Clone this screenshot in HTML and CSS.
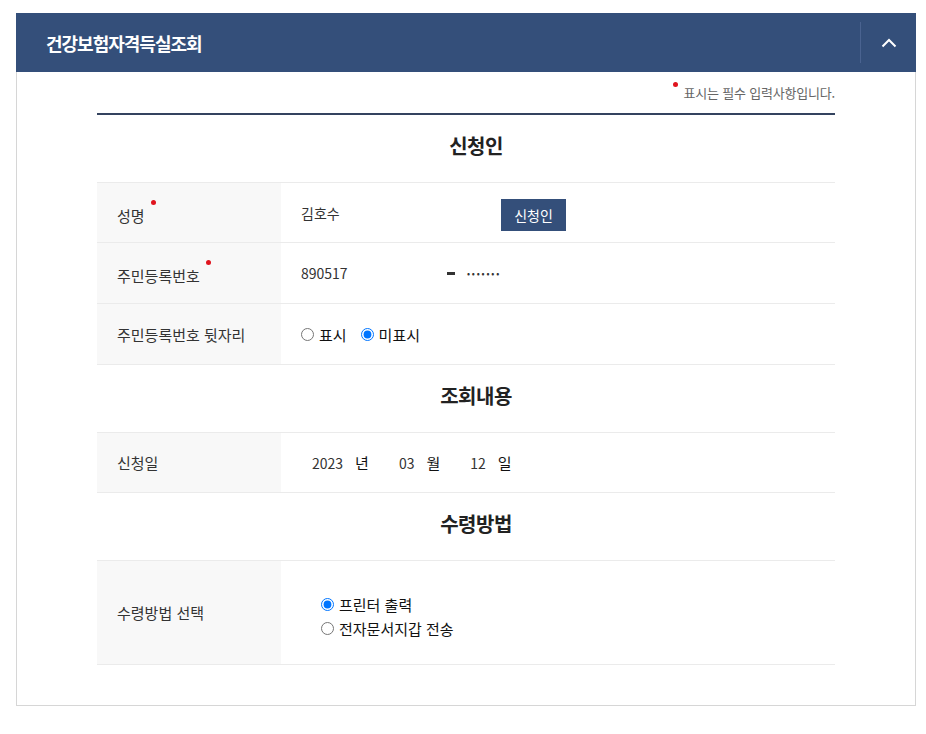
FILE: index.html
```html
<!DOCTYPE html>
<html lang="ko">
<head>
    <meta charset="UTF-8">
    <meta name="viewport" content="width=device-width, initial-scale=1.0">
    <title>건강보험자격득실조회</title>
    <link rel="stylesheet" href="styles.css">
</head>
<body>
    <div class="panel">
        <div class="panel_head">
            <h2 class="panel_title">건강보험자격득실조회</h2>
            <a class="toggle">
                <svg width="16" height="10" viewBox="0 0 16 10"><path d="M1.5 8.5 L8 2 L14.5 8.5" fill="none" stroke="#fff" stroke-width="2"/></svg>
            </a>
        </div>
        <div class="panel_body">
            <p class="note"><span class="req"></span>표시는 필수 입력사항입니다.</p>
            <div class="form">
                <h3 class="sec_title">신청인</h3>
                <div class="row">
                    <div class="th"><span>성명<span class="req"></span></span></div>
                    <div class="td">
                        <span class="name">김호수</span>
                        <a class="btn">신청인</a>
                    </div>
                </div>
                <div class="row">
                    <div class="th"><span>주민등록번호<span class="req"></span></span></div>
                    <div class="td">
                        <span class="jumin">890517</span>
                        <span class="dash"></span>
                        <span class="mask">&bull;&bull;&bull;&bull;&bull;&bull;&bull;</span>
                    </div>
                </div>
                <div class="row">
                    <div class="th">주민등록번호 뒷자리</div>
                    <div class="td">
                        <label class="radio"><input type="radio" name="show">표시</label>
                        <label class="radio"><input type="radio" name="show" checked>미표시</label>
                    </div>
                </div>

                <h3 class="sec_title">조회내용</h3>
                <div class="row">
                    <div class="th">신청일</div>
                    <div class="td date">
                        <span class="num">2023</span><span class="unit">년</span>
                        <span class="num">03</span><span class="unit">월</span>
                        <span class="num">12</span><span class="unit">일</span>
                    </div>
                </div>

                <h3 class="sec_title">수령방법</h3>
                <div class="row row_tall">
                    <div class="th">수령방법 선택</div>
                    <div class="td receive">
                        <label class="radio"><input type="radio" name="recv" checked>프린터 출력</label>
                        <label class="radio"><input type="radio" name="recv">전자문서지갑 전송</label>
                    </div>
                </div>
            </div>
        </div>
    </div>
</body>
</html>
```

FILE: styles.css
```css
* {
    margin: 0;
    padding: 0;
    box-sizing: border-box;
}
body {
    padding: 13px 0 0 16px;
    font-family: "Noto Sans CJK KR", "Noto Sans", sans-serif;
    color: #333;
    background: #fff;
}
a {
    text-decoration: none;
}
.panel {
    width: 900px;
}
.panel_head {
    display: flex;
    align-items: center;
    height: 59px;
    background-color: #344f7a;
}
.panel_title {
    flex: 1;
    padding-left: 30px;
    font-size: 18px;
    font-weight: 700;
    letter-spacing: -1px;
    color: #fff;
}
.toggle {
    display: flex;
    align-items: center;
    justify-content: center;
    width: 56px;
    height: 41px;
    border-left: 1px solid #4a6390;
}
.panel_body {
    padding: 9px 80px 40px;
    border: 1px solid #d6d6d6;
    border-top: 0;
}
.note {
    text-align: right;
    font-size: 13px;
    line-height: 24px;
    color: #666;
    letter-spacing: -0.2px;
    padding-bottom: 8px;
}
.req {
    display: inline-block;
    width: 5px;
    height: 5px;
    border-radius: 50%;
    background-color: #e0141e;
    vertical-align: top;
    margin: 1px 6px 0 0;
}
.th .req {
    vertical-align: 17px;
    margin: 0 0 0 6px;
}
.form {
    border-top: 2px solid #34435f;
}
.sec_title {
    display: flex;
    align-items: center;
    justify-content: center;
    height: 67px;
    padding: 0 0 6px 20px;
    font-size: 20px;
    font-weight: 700;
    color: #222;
    letter-spacing: -0.5px;
}
.row {
    display: flex;
    min-height: 61px;
    border-top: 1px solid #ebebeb;
    border-bottom: 1px solid #ebebeb;
}
.row + .row {
    border-top: 0;
}
.row_tall {
    min-height: 105px;
}
.th {
    display: flex;
    align-items: center;
    width: 184px;
    padding-left: 20px;
    background-color: #f8f8f8;
    font-size: 15px;
    color: #333;
}
.td {
    flex: 1;
    display: flex;
    align-items: center;
    padding-left: 20px;
    font-size: 14px;
    color: #333;
}
.name {
    width: 200px;
}
.btn {
    display: inline-block;
    width: 65px;
    height: 32px;
    line-height: 32px;
    margin-top: 4px;
    text-align: center;
    background-color: #344f7a;
    color: #fff;
    font-size: 14px;
}
.jumin {
    width: 146px;
}
.dash {
    display: inline-block;
    width: 8px;
    height: 3px;
    background-color: #333;
    margin-right: 12px;
}
.mask {
    font-size: 9px;
    letter-spacing: 1.8px;
    color: #333;
}
.radio {
    display: inline-flex;
    align-items: center;
    font-size: 15px;
    color: #111;
    margin-right: 14px;
}
.radio input {
    width: 13px;
    height: 13px;
    margin: 0 5px 0 0;
}
.date {
    padding-left: 31px;
}
.date .num {
    font-size: 14px;
}
.date .unit {
    font-size: 15px;
    color: #111;
    margin: 0 30px 0 12px;
}
.receive {
    flex-direction: column;
    align-items: flex-start;
    justify-content: center;
    padding: 8px 0 0 40px;
}
.receive .radio {
    line-height: 24px;
}
```
